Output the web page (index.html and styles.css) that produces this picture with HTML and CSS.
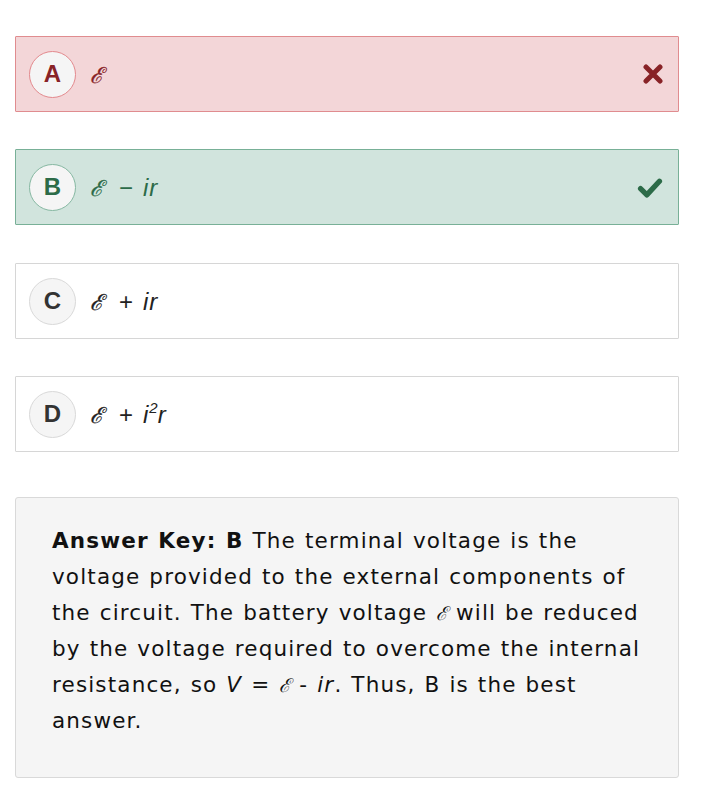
FILE: index.html
```html
<!DOCTYPE html>
<html>
<head>
<meta charset="utf-8">
<link rel="stylesheet" href="styles.css">
</head>
<body>
<div class="page">
  <div class="option wrong">
    <span class="badge">A</span>
    <span class="text"><span class="emf">ℰ</span></span>
    <svg class="mark" viewBox="0 0 20 20" width="20" height="20"><path d="M3 3 L17 17 M17 3 L3 17" stroke="currentColor" stroke-width="5" stroke-linecap="round"/></svg>
  </div>
  <div class="option right">
    <span class="badge">B</span>
    <span class="text"><span class="emf">ℰ</span><span class="op">−</span><i>ir</i></span>
    <svg class="mark" viewBox="0 0 24 20" width="26" height="21"><path d="M3 11 L9 17 L21 4" stroke="currentColor" stroke-width="5" fill="none" stroke-linecap="round" stroke-linejoin="round"/></svg>
  </div>
  <div class="option third">
    <span class="badge">C</span>
    <span class="text"><span class="emf">ℰ</span><span class="op">+</span><i>ir</i></span>
  </div>
  <div class="option">
    <span class="badge">D</span>
    <span class="text"><span class="emf">ℰ</span><span class="op">+</span><i>i<sup>2</sup>r</i></span>
  </div>
  <div class="answer">
    <p><b>Answer Key: B</b> The terminal voltage is the voltage provided to the external components of the circuit. The battery voltage <span class="emf small">ℰ</span> will be reduced by the voltage required to overcome the internal resistance, so <i>V</i> = <span class="emf small">ℰ</span> - <i>ir</i>. Thus, B is the best answer.</p>
  </div>
</div>
</body>
</html>
```
FILE: styles.css
```css
html, body { margin: 0; padding: 0; background: #fff; }
.page {
  padding: 36px 41px 28px 15px;
  display: flex;
  flex-direction: column;
  gap: 37px;
}
.option {
  box-sizing: border-box;
  height: 76px;
  border: 1px solid #d6d6d6;
  border-radius: 1px;
  background: #fff;
  display: flex;
  align-items: center;
  padding: 0 16px 0 13px;
  color: #222;
  font-family: "Liberation Sans", Arial, sans-serif;
}
.third { margin-top: 1px; }
.badge {
  box-sizing: border-box;
  width: 47px;
  height: 47px;
  border-radius: 50%;
  background: #f5f5f5;
  border: 1px solid #d9d9d9;
  display: flex;
  align-items: center;
  justify-content: center;
  font-weight: bold;
  font-size: 24px;
  color: #333;
  flex: none;
}
.text {
  margin-left: 14px;
  font-size: 24px;
  flex: 1;
  white-space: nowrap;
}
.text i { font-style: italic; letter-spacing: 1px; }
.text sup { font-size: 15px; vertical-align: 10px; line-height: 0; letter-spacing: 0; }
.emf {
  font-family: "DejaVu Serif", serif;
  font-style: italic;
  font-size: 22px;
  -webkit-text-stroke: 0.3px currentColor;
}
.op { margin: 0 10px 0 16px; }
.mark { flex: none; margin-right: -1px; }
.wrong { background: #f3d6d8; border-color: #e08c8f; color: #882327; }
.wrong .badge { border-color: #e3898d; color: #882327; }
.right { background: #d1e4dd; border-color: #78b097; color: #2c6b48; }
.right .badge { border-color: #86b8a2; color: #2c6b48; }
.answer {
  margin-top: 8px;
  background: #f5f5f5;
  border: 1px solid #d9d9d9;
  border-radius: 3px;
  padding: 25px 22px 36px 36px;
  height: 281px;
  box-sizing: border-box;
}
.answer p {
  margin: 0;
  font-family: "DejaVu Sans", Verdana, sans-serif;
  font-size: 21.5px;
  letter-spacing: 1.15px;
  word-spacing: 1px;
  line-height: 36px;
  color: #111;
}
.answer .small { font-size: 19px; letter-spacing: 0; -webkit-text-stroke: 0; }
```
